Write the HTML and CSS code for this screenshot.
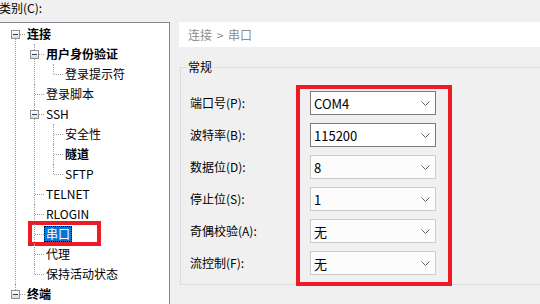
FILE: index.html
```html
<!DOCTYPE html>
<html lang="zh-CN">
<head>
    <meta charset="UTF-8">
    <title>会话选项 - 串口</title>
    <link rel="stylesheet" href="styles.css">
</head>
<body>
    <div class="caption">类别(C):</div>
    <div class="main">
        <div class="tree">
            <ul>
                <li class="first">
                    <div class="row"><span class="exp"></span><span class="label b">连接</span></div>
                    <ul>
                        <li>
                            <div class="row"><span class="exp"></span><span class="label b">用户身份验证</span></div>
                            <ul>
                                <li class="last"><div class="row"><span class="label">登录提示符</span></div></li>
                            </ul>
                        </li>
                        <li><div class="row"><span class="label">登录脚本</span></div></li>
                        <li>
                            <div class="row"><span class="exp"></span><span class="label">SSH</span></div>
                            <ul>
                                <li><div class="row"><span class="label">安全性</span></div></li>
                                <li><div class="row"><span class="label b">隧道</span></div></li>
                                <li class="last"><div class="row"><span class="label">SFTP</span></div></li>
                            </ul>
                        </li>
                        <li><div class="row"><span class="label">TELNET</span></div></li>
                        <li><div class="row"><span class="label">RLOGIN</span></div></li>
                        <li><div class="row"><span class="label sel">串口</span></div></li>
                        <li><div class="row"><span class="label">代理</span></div></li>
                        <li class="last"><div class="row"><span class="label">保持活动状态</span></div></li>
                    </ul>
                </li>
                <li class="last">
                    <div class="row"><span class="exp"></span><span class="label b">终端</span></div>
                </li>
            </ul>
        </div>

        <div class="panel">
            <div class="crumb">连接 &gt; 串口</div>
            <fieldset class="group">
                <legend>常规</legend>
                <div class="form">
                    <div class="labels">
                        <div>端口号(P):</div>
                        <div>波特率(B):</div>
                        <div>数据位(D):</div>
                        <div>停止位(S):</div>
                        <div>奇偶校验(A):</div>
                        <div>流控制(F):</div>
                    </div>
                    <div class="combos">
                        <div class="combo dark"><span>COM4</span><svg width="9" height="5" viewBox="0 0 9 5"><path d="M0.5 0.5 L4.5 4.5 L8.5 0.5" /></svg></div>
                        <div class="combo dark"><span>115200</span><svg width="9" height="5" viewBox="0 0 9 5"><path d="M0.5 0.5 L4.5 4.5 L8.5 0.5" /></svg></div>
                        <div class="combo"><span>8</span><svg width="9" height="5" viewBox="0 0 9 5"><path d="M0.5 0.5 L4.5 4.5 L8.5 0.5" /></svg></div>
                        <div class="combo"><span>1</span><svg width="9" height="5" viewBox="0 0 9 5"><path d="M0.5 0.5 L4.5 4.5 L8.5 0.5" /></svg></div>
                        <div class="combo"><span>无</span><svg width="9" height="5" viewBox="0 0 9 5"><path d="M0.5 0.5 L4.5 4.5 L8.5 0.5" /></svg></div>
                        <div class="combo"><span>无</span><svg width="9" height="5" viewBox="0 0 9 5"><path d="M0.5 0.5 L4.5 4.5 L8.5 0.5" /></svg></div>
                    </div>
                </div>
            </fieldset>
        </div>
    </div>
</body>
</html>
```

FILE: styles.css
```css
* {
    margin: 0;
    padding: 0;
    box-sizing: border-box;
}

body {
    background: #f0f0f0;
    font-family: "Noto Sans CJK SC", sans-serif;
    font-size: 12px;
    color: #000;
    overflow: hidden;
    width: 540px;
    height: 304px;
}

.caption {
    height: 22px;
    line-height: 16px;
    margin-left: -1px;
}

.main {
    display: flex;
    gap: 9px;
    width: 570px;
}

/* tree */
.tree {
    width: 171px;
    height: 290px;
    margin-left: -1px;
    background: #fff;
    border: 1px solid #828790;
    padding-top: 1px;
    padding-left: 1px;
    overflow: hidden;
}

.tree ul {
    list-style: none;
}

.tree ul ul {
    padding-left: 19px;
}

.tree li {
    position: relative;
}

.tree li::after {
    content: '';
    position: absolute;
    left: 14px;
    top: 0;
    bottom: 0;
    border-left: 1px dotted #a0a0a0;
}

.tree li.first::after {
    top: 10px;
}

.tree li.last::after {
    bottom: auto;
    height: 10px;
}

.row {
    position: relative;
    height: 20px;
    display: flex;
    align-items: center;
    padding-left: 24px;
}

.row::before {
    content: '';
    position: absolute;
    left: 15px;
    top: 10px;
    width: 9px;
    border-top: 1px dotted #a0a0a0;
}

.exp {
    position: absolute;
    left: 10px;
    top: 6px;
    width: 9px;
    height: 9px;
    border: 1px solid #919191;
    background: linear-gradient(#ffffff, #dcdcdc);
    z-index: 1;
}

.exp::before {
    content: '';
    position: absolute;
    left: 1px;
    top: 3px;
    width: 5px;
    height: 1px;
    background: #2b3f6b;
}

.label {
    position: relative;
    padding: 0 2px;
    line-height: 16px;
    white-space: nowrap;
}

.label.b {
    font-weight: bold;
}

.label.sel {
    background: #0078d7;
    color: #fff;
    outline: 1px dotted #000;
    outline-offset: -1px;
}

.label.sel::after {
    content: '';
    position: absolute;
    left: -16px;
    right: -29px;
    top: -5px;
    bottom: -4px;
    border: 4px solid #ed1c24;
}

/* right panel */
.panel {
    flex: 1;
    display: flex;
    flex-direction: column;
}

.crumb {
    height: 25px;
    line-height: 25px;
    background: #fff;
    padding-left: 9px;
    color: #8c8c8c;
    word-spacing: 2px;
}

.group {
    margin-top: 12px;
    margin-left: 1px;
    border: 1px solid #dcdcdc;
    padding: 16px 0 9px 9px;
    min-width: 0;
}

.group legend {
    margin-left: -4px;
    padding: 0 2px;
    line-height: 16px;
}

.form {
    display: flex;
}

.labels {
    width: 120px;
    display: flex;
    flex-direction: column;
    gap: 8px;
}

.labels div {
    height: 24px;
    line-height: 24px;
    white-space: nowrap;
}

.combos {
    position: relative;
    width: 126px;
    display: flex;
    flex-direction: column;
    gap: 8px;
}

.combos::after {
    content: '';
    position: absolute;
    left: -14px;
    right: -16px;
    top: -6px;
    bottom: -11px;
    border: 4px solid #ed1c24;
}

.combo {
    height: 24px;
    display: flex;
    align-items: center;
    justify-content: space-between;
    padding: 0 5px 0 3px;
    background: #fcfcfc;
    border: 1px solid #cccccc;
}

.combo.dark {
    background: #fff;
    border-color: #7a7a7a;
}

.combo span {
    font-size: 13px;
}

.combo svg {
    fill: none;
    stroke: #606060;
    stroke-width: 1;
}
```
